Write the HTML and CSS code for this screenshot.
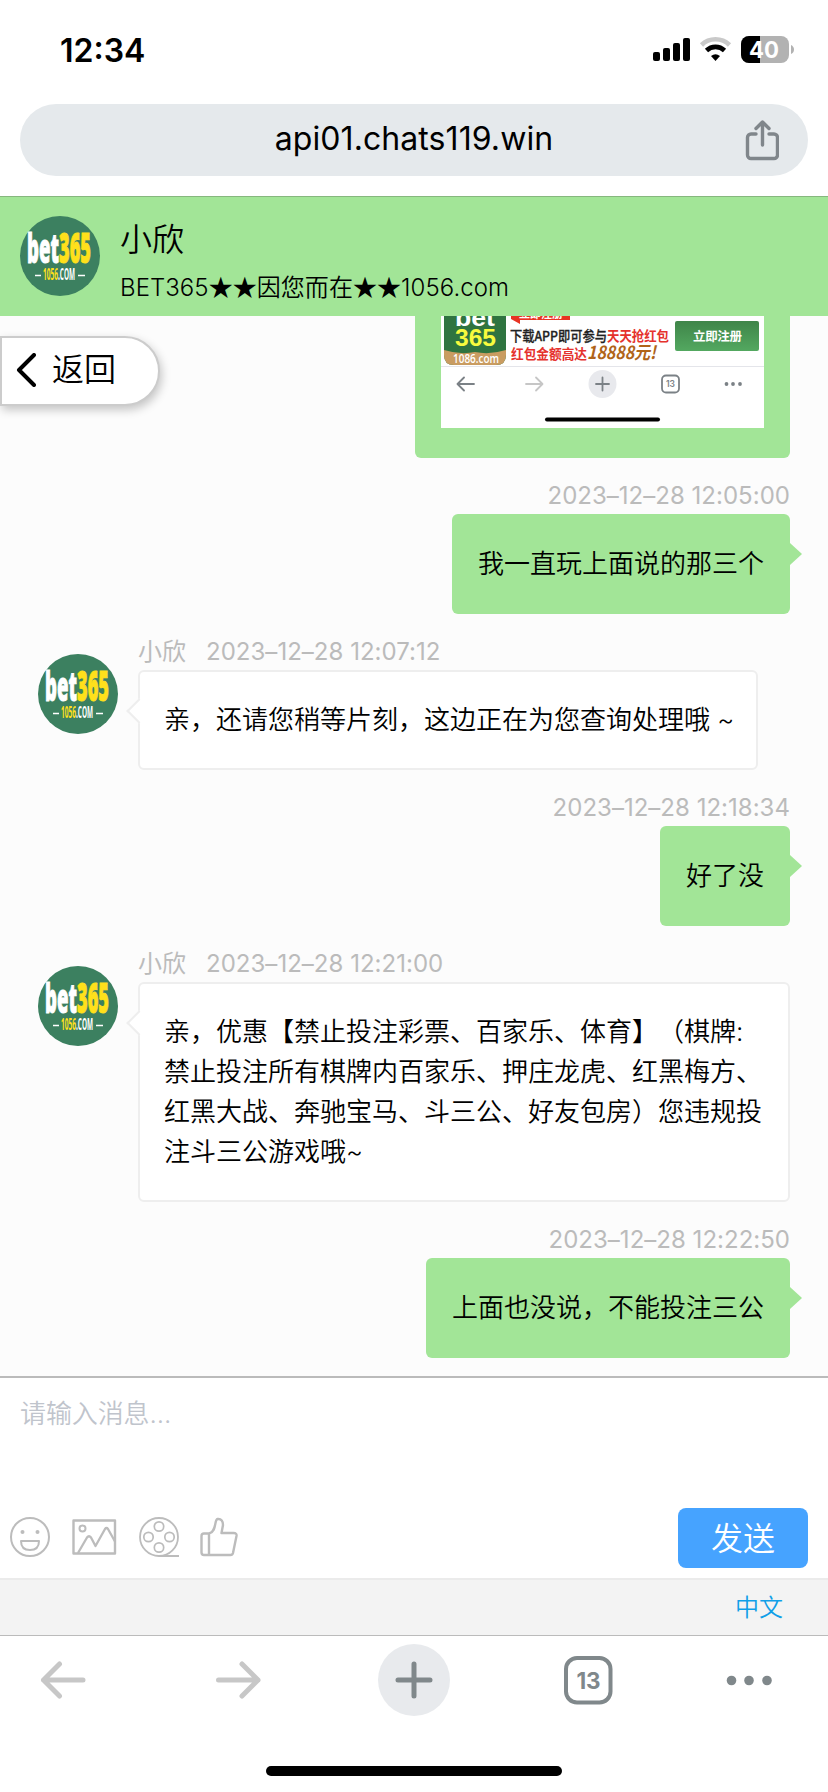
FILE: index.html
```html
<!DOCTYPE html>
<html lang="zh-CN">
<head>
<meta charset="utf-8">
<title>小欣</title>
<link rel="stylesheet" href="styles.css">
</head>
<body>
<svg width="0" height="0" class="defs">
  <symbol id="avatar" viewBox="0 0 80 80">
    <circle cx="40" cy="40" r="40" fill="#3c8060"/>
    <g font-family="Open Sans, sans-serif" font-weight="800">
      <text x="7" y="47" font-size="40" textLength="32" lengthAdjust="spacingAndGlyphs" fill="#fff" stroke="#fff">bet</text>
      <text x="39" y="47" font-size="42" textLength="32" lengthAdjust="spacingAndGlyphs" fill="#ffe01b" stroke="#ffe01b">365</text>
    </g>
    <g font-family="Open Sans, sans-serif" font-weight="700" font-size="15.500">
      <text x="23" y="64" textLength="15" lengthAdjust="spacingAndGlyphs" fill="#ffe01b">1056</text>
      <text x="38" y="64" textLength="17" lengthAdjust="spacingAndGlyphs" fill="#fff">.COM</text>
    </g>
    <path d="M15 59.500h6M58 59.500h7" stroke="#fff" stroke-width="1.500"/>
  </symbol>
</svg>
<main class="screen">
  <div class="status">
    <span class="clock">12:34</span>
    <svg class="status-icons" width="142" height="30" viewBox="0 0 142 30">
      <rect x="1" y="17" width="7" height="9" rx="2"/><rect x="11" y="13" width="7" height="13" rx="2"/><rect x="21" y="8" width="7" height="18" rx="2"/><rect x="31" y="3" width="7" height="23" rx="2"/>
      <path d="M49.500 10a20 20 0 0 1 28 0" fill="none" stroke="#c9c9c9" stroke-width="4.600"/>
      <path d="M54.500 15.500a13 13 0 0 1 18 0" fill="none" stroke="#000" stroke-width="4.600"/>
      <path d="M63.500 26l-4.500-5q4.500-3.500 9 0z"/>
      <rect x="89" y="1" width="48" height="27" rx="8" fill="#b2b2b2"/>
      <path d="M97 1h11v27H97a8 8 0 0 1-8-8V9a8 8 0 0 1 8-8z"/>
      <path d="M139 10q3 1.500 3 4.500t-3 4.500z" fill="#b2b2b2"/>
      <text x="97" y="22.500" font-family="Inter, sans-serif" font-weight="700" font-size="23" textLength="30" lengthAdjust="spacingAndGlyphs" fill="#fff">40</text>
    </svg>
  </div>
  <div class="address">
    <span class="url">api01.chats119.win</span>
    <svg class="share" width="34" height="42" viewBox="0 0 34 42" fill="none" stroke="#80868b" stroke-width="3.400" stroke-linecap="round" stroke-linejoin="round"><path d="M11 15H6a3.500 3.500 0 0 0-3.500 3.500V36A3.500 3.500 0 0 0 6 39.500h23a3.500 3.500 0 0 0 3.500-3.500V18.500A3.500 3.500 0 0 0 29 15h-5M17.500 26V3.500M11 9.500l6.500-6.500L24 9.500"/></svg>
  </div>
  <header class="header">
    <svg class="avatar"><use href="#avatar"/></svg>
    <div class="titles"><div class="name">小欣</div><div class="tagline">BET365<span class="stars">★★</span>因您而在<span class="stars">★★</span>1056.com</div></div>
  </header>
  <section class="chat">
    <button class="back"><svg width="20" height="34" viewBox="0 0 20 34" fill="none" stroke="#000" stroke-width="4" stroke-linecap="round" stroke-linejoin="round"><path d="M18 2L3 17l15 15"/></svg><span>返回</span></button>
    <div class="photo-bubble">
      <svg width="323" height="112" viewBox="0 0 323 112">
        <defs>
          <linearGradient id="reg" x2="0" y2="1"><stop stop-color="#3f8549"/><stop offset="1" stop-color="#53a860"/></linearGradient>
        </defs>
        <rect width="323" height="112" fill="#fff"/>
        <path d="M3 0h62v39q0 10-10 10H13q-10 0-10-10z" fill="#2f7440"/>
        <path d="M3 34q16 5 31 2 15 3 31-2v5q0 10-10 10H13q-10 0-10-10z" fill="#c99c61"/>
        <g font-family="Liberation Sans, sans-serif" font-weight="700">
          <text x="14" y="10" font-size="24" textLength="40" lengthAdjust="spacingAndGlyphs" fill="#fff">bet</text>
          <text x="14" y="30" font-size="23" textLength="41" lengthAdjust="spacingAndGlyphs" fill="#f8fb3e">365</text>
        </g>
        <text x="12" y="47" font-family="Open Sans, sans-serif" font-size="12" font-weight="600" textLength="46" lengthAdjust="spacingAndGlyphs" fill="#fff">1086.com</text>
        <path d="M70 0h59v4H79v4l-9-5z" fill="#e83323"/>
        <g font-family="Noto Sans CJK SC, sans-serif" font-weight="700">
          <text x="78" y="2" font-size="11" textLength="44" fill="#fff">立即注册</text>
          <text x="69" y="24.500" font-size="13.500" font-weight="500" textLength="97" lengthAdjust="spacingAndGlyphs" fill="#222" stroke="#222" stroke-width=".3">下载APP即可参与</text>
          <text x="166" y="24.500" font-size="13.500" textLength="62" lengthAdjust="spacingAndGlyphs" fill="#e5322d">天天抢红包</text>
          <text x="70" y="42.500" font-size="13.500" textLength="76" lengthAdjust="spacingAndGlyphs" fill="#e5322d">红包金额高达</text>
          <text x="146" y="43" font-size="18" font-style="italic" textLength="69" lengthAdjust="spacingAndGlyphs" fill="#b06419">18888元!</text>
        </g>
        <rect x="234" y="5" width="84" height="30" rx="2" fill="url(#reg)"/>
        <text x="252" y="24.500" font-family="Noto Sans CJK SC, sans-serif" font-size="12.500" font-weight="700" textLength="49" fill="#fff">立即注册</text>
        <path d="M0 50.500h323" stroke="#e4e5ea"/>
        <circle cx="161.500" cy="68" r="14" fill="#e8e9ed"/>
        <g fill="none" stroke="#7b8186" stroke-width="1.800" stroke-linecap="round" stroke-linejoin="round"><path d="M33 68H17M23 61.500L16.500 68l6.500 6.500M155 68h13M161.500 61.500v13"/><path d="M85 68h16M95 61.500l6.500 6.500-6.500 6.500" stroke="#c6c6c6"/><rect x="221" y="59.500" width="17" height="17" rx="4"/></g>
        <text x="229.500" y="71" text-anchor="middle" font-family="Inter, sans-serif" font-size="8.500" font-weight="600" fill="#7b8186">13</text>
        <g fill="#7b8186"><circle cx="285.500" cy="68" r="1.900"/><circle cx="292" cy="68" r="1.900"/><circle cx="299" cy="68" r="1.900"/></g>
        <rect x="104" y="101.500" width="115" height="4" rx="2"/>
      </svg>
    </div>
    <article class="mine"><time class="meta">2023–12–28 12:05:00</time><div class="bubble">我一直玩上面说的那三个</div></article>
    <article class="theirs"><svg class="avatar"><use href="#avatar"/></svg><div class="body"><div class="meta"><span>小欣</span><time>2023–12–28 12:07:12</time></div><div class="bubble short">亲，还请您稍等片刻，这边正在为您查询处理哦 ~</div></div></article>
    <article class="mine"><time class="meta">2023–12–28 12:18:34</time><div class="bubble">好了没</div></article>
    <article class="theirs"><svg class="avatar"><use href="#avatar"/></svg><div class="body"><div class="meta"><span>小欣</span><time>2023–12–28 12:21:00</time></div><div class="bubble full">亲，优惠【禁止投注彩票、百家乐、体育】（棋牌:<br>禁止投注所有棋牌内百家乐、押庄龙虎、红黑梅方、<br>红黑大战、奔驰宝马、斗三公、好友包房）您违规投<br>注斗三公游戏哦~</div></div></article>
    <article class="mine"><time class="meta">2023–12–28 12:22:50</time><div class="bubble">上面也没说，不能投注三公</div></article>
  </section>
  <section class="composer">
    <div class="placeholder">请输入消息...</div>
    <div class="tools">
      <svg width="240" height="42" viewBox="0 0 240 42" fill="none" stroke="#bcbcbc" stroke-width="2" stroke-linejoin="round">
        <circle cx="30" cy="21" r="19"/><circle cx="22.500" cy="16" r="2" fill="#bcbcbc" stroke="none"/><circle cx="37.500" cy="16" r="2" fill="#bcbcbc" stroke="none"/><path d="M21 25h18q0 9-9 9t-9-9z"/>
        <rect x="73.500" y="4.500" width="41.500" height="33" stroke-width="2.400"/><circle cx="82.500" cy="12.500" r="3"/><path d="M78 37l9-15.500q2-2.500 4 0l4.500 8.500 9.500-17q1.500-2 3 0l7 12.500" stroke-width="2.300"/>
        <circle cx="159" cy="21" r="19" stroke-width="1.800"/><circle cx="159" cy="10.500" r="4.700" stroke-width="1.700"/><circle cx="148.500" cy="21" r="4.700" stroke-width="1.700"/><circle cx="169.500" cy="21" r="4.700" stroke-width="1.700"/><circle cx="159" cy="31.500" r="4.700" stroke-width="1.700"/><path d="M159 40h20"/>
        <path d="M204 17.500h5c8-2 5-13.500 8.500-14.500 4-.5 5.500 2.500 5.500 6l-1.500 8h12q3.500 0 3 3l-3.500 17q-.5 2-2.500 2H204q-2.500 0-2.500-2.500v-16.500q0-2.500 2.500-2.500zM209 17.500V39" stroke-width="2.400"/>
      </svg>
      <button class="send">发送</button>
    </div>
  </section>
  <div class="lang">中文</div>
  <nav class="nav">
    <svg width="828" height="96" viewBox="0 0 828 96" fill="none" stroke="#80888b" stroke-width="5" stroke-linecap="round" stroke-linejoin="round">
      <path d="M83 44H43.500M59.500 28L43.500 44l16 16M218.500 44H258M242 28l16 16-16 16" stroke="#c7c7c7"/>
      <circle cx="414" cy="44" r="36" fill="#e8eaed" stroke="none"/><path d="M398 44h32M414 28v32"/>
      <rect x="566" y="22" width="44.500" height="44.500" rx="11" stroke-width="4"/>
      <text x="588.500" y="52.500" text-anchor="middle" font-family="Inter, sans-serif" font-size="22.500" font-weight="650" fill="#80888b" stroke="none">13</text>
      <g fill="#80888b" stroke="none"><circle cx="731.500" cy="44.500" r="4.800"/><circle cx="749" cy="44.500" r="4.800"/><circle cx="767" cy="44.500" r="4.800"/></g>
    </svg>
  </nav>
  <div class="home"></div>
</main>
</body>
</html>
```

FILE: styles.css
```css
* { box-sizing: border-box; }
body { margin: 0; background: #fff; color: #000; font-family: Inter, "Noto Sans CJK SC", sans-serif; text-spacing-trim: space-all; }
.defs { position: absolute; }
.screen { width: 828px; height: 1792px; display: flex; flex-direction: column; overflow: hidden; }
button { border: 0; font: inherit; color: inherit; }
.status { height: 104px; display: flex; justify-content: space-between; align-items: flex-start; padding: 35px 34px 0 60px; }
.clock { font-size: 32px; line-height: 31px; font-weight: 600; }
.address { height: 72px; margin: 0 20px; border-radius: 36px; background: #e5e9ec; display: flex; align-items: center; padding: 0 29px 0 63px; }
.url { flex: 1; text-align: center; font-size: 32px; line-height: 40px; padding-bottom: 2px; letter-spacing: .08px; }
.share { flex: none; }
.header { height: 120px; margin-top: 20px; flex: none; display: flex; gap: 20px; padding: 19px 20px 0; background: #a2e597; border-top: 1px solid #86b77e; }
.avatar { width: 80px; height: 80px; flex: none; }
.titles { white-space: nowrap; font-weight: 350; }
.name { font-size: 32px; line-height: 48px; }
.tagline { font-size: 24px; line-height: 34px; margin-top: 7px; letter-spacing: .05px; }
.stars { font-family: "Noto Sans CJK SC", sans-serif; line-height: 1; }
.chat { height: 1060px; flex: none; position: relative; background: #fcfcfc; padding-right: 38px; display: flex; flex-direction: column; gap: 20px; }
.back { position: absolute; left: 0; top: 20px; width: 160px; height: 70px; display: flex; align-items: center; gap: 16px; padding: 0 0 2px 14px; border: 2px solid #ccc; border-radius: 0 35px 35px 0; background: #fff; font-size: 32px; line-height: 40px; font-weight: 350; box-shadow: 2px 4px 10px rgba(0,0,0,.22); }
.photo-bubble { align-self: flex-end; width: 375px; height: 142px; padding-left: 26px; background: #a2e597; border-radius: 0 0 6px 6px; }
.photo-bubble svg { display: block; }
.meta { height: 36px; line-height: 36px; color: #bbb; font-size: 24px; letter-spacing: .02px; white-space: nowrap; display: block; }
.mine { display: flex; flex-direction: column; align-items: flex-end; }
.bubble { position: relative; font-size: 26px; line-height: 40px; padding: 30px 26px; border-radius: 6px; white-space: nowrap; font-weight: 350; }
.mine .bubble { background: #a2e597; }
.mine .bubble::after { content: ""; position: absolute; left: 100%; top: 29px; border-left: 12px solid #a2e597; border-top: 11px solid transparent; border-bottom: 11px solid transparent; }
.theirs { display: flex; gap: 20px; padding-left: 38px; }
.theirs > .avatar { margin-top: 20px; }
.body { display: flex; flex-direction: column; align-items: flex-start; }
.body .meta { display: flex; gap: 20px; }
.theirs .bubble { background: #fff; border: 2px solid #eee; padding: 28px 24px; }
.theirs .short { width: 620px; }
.theirs .full { width: 652px; }
.theirs .bubble::before { content: ""; position: absolute; left: -10px; top: 30px; width: 16px; height: 16px; background: #fff; border-left: 2px solid #eee; border-bottom: 2px solid #eee; transform: rotate(45deg); }
.composer { height: 202px; flex: none; border-top: 2px solid #bbb; display: flex; flex-direction: column; justify-content: space-between; padding: 16px 20px 10px 0; }
.placeholder { padding-left: 20px; font-size: 26px; line-height: 40px; color: #c0c4cc; font-weight: 350; letter-spacing: -.1px; }
.tools { display: flex; justify-content: space-between; align-items: flex-start; }
.tools svg { margin-top: 8px; }
.send { width: 130px; height: 60px; border-radius: 8px; background: #46a3ff; color: #fff; font-size: 32px; font-weight: 350; padding: 0 0 4px; }
.lang { height: 58px; flex: none; background: #f3f3f3; border-top: 2px solid #ebebeb; border-bottom: 1px solid #bbb; padding-right: 45px; text-align: right; color: #109fe8; font-size: 24px; line-height: 56px; font-weight: 350; }
.nav { height: 96px; flex: none; }
.nav svg { display: block; }
.home { width: 296px; height: 10px; border-radius: 5px; background: #000; margin: 34px auto 0; flex: none; }
```
